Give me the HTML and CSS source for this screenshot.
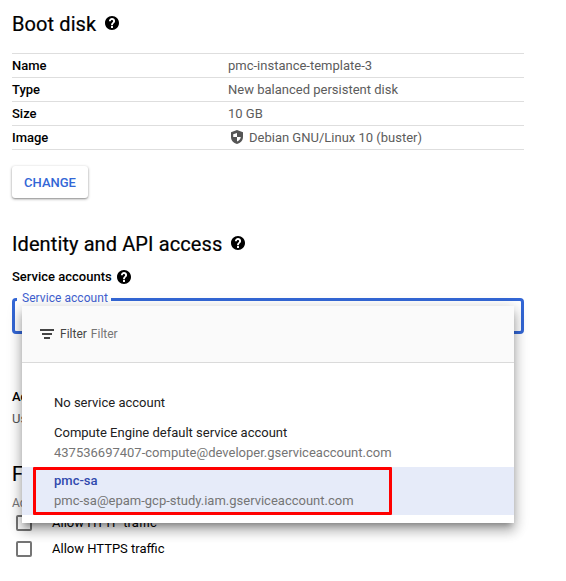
FILE: index.html
```html
<!DOCTYPE html>
<html lang="en">
<head>
<meta charset="utf-8">
<title>Create an instance</title>
<link rel="stylesheet" href="styles.css">
</head>
<body>
<svg class="defs" width="0" height="0" aria-hidden="true">
  <symbol id="help" viewBox="2 2 20 20"><path d="M12 2C6.480 2 2 6.480 2 12s4.480 10 10 10 10-4.480 10-10S17.520 2 12 2zm1.400 17h-2.800v-2.700h2.800V19zm2.100-7.400-.9.920c-.72.730-1.200 1.400-1.200 2.780h-2.800v-.5c0-1.300.5-2.200 1.200-2.900l1.240-1.260c.37-.36.500-.86.500-1.300 0-1-.7-1.600-1.600-1.600s-1.600.8-1.600 1.800H7.600C7.600 6.900 9.600 5 12 5s4.400 1.900 4.400 4.200c0 .9-.35 1.800-.9 2.400z"/></symbol>
</svg>
<main class="form">
  <h2 class="title">Boot disk <svg class="help"><use href="#help"/></svg></h2>
  <dl class="summary">
    <div class="row"><dt>Name</dt><dd>pmc-instance-template-3</dd></div>
    <div class="row"><dt>Type</dt><dd>New balanced persistent disk</dd></div>
    <div class="row"><dt>Size</dt><dd>10 GB</dd></div>
    <div class="row"><dt>Image</dt><dd class="image"><svg class="shield" viewBox="0 0 12 14"><path fill-rule="evenodd" d="M6 0 0 2.300V7c0 3.400 2.500 6.200 6 7 3.500-.8 6-3.600 6-7V2.300L6 0zM6 3v4H2.200V4.300L6 3zM6 7h3.800C9.500 9 8.200 10.700 6 11.500V7z"/></svg>Debian GNU/Linux 10 (buster)</dd></div>
  </dl>
  <button class="change">CHANGE</button>

  <h2 class="title identity">Identity and API access <svg class="help"><use href="#help"/></svg></h2>
  <div class="label">Service accounts <svg class="help"><use href="#help"/></svg></div>
  <div class="select">
    <span class="floating">Service account</span>
    <div class="menu">
      <div class="filter">
        <svg class="lines" viewBox="0 0 14 10"><path d="M0 0h14v2H0zM2 4h10v2H2zM4 8h6v2H4z"/></svg>
        <span class="filter-label">Filter</span><span class="filter-hint">Filter</span>
      </div>
      <ul class="options">
        <li class="option single"><span>No service account</span></li>
        <li class="option"><span>Compute Engine default service account</span><small>437536697407-compute@developer.gserviceaccount.com</small></li>
        <li class="option selected"><span>pmc-sa</span><small>pmc-sa@epam-gcp-study.iam.gserviceaccount.com</small><i class="marker"></i></li>
      </ul>
    </div>
  </div>
  <div class="scopes">Ac</div>
  <div class="scopes-hint">Us</div>
  <h2 class="title firewall">F</h2>
  <div class="firewall-hint">Ad</div>
  <label class="check"><span class="box"></span>Allow HTTP traffic</label>
  <label class="check"><span class="box"></span>Allow HTTPS traffic</label>
</main>
</body>
</html>
```
FILE: styles.css
```css
* { box-sizing: border-box; }
body {
  margin: 0;
  height: 581px;
  overflow: hidden;
  background: #fff;
  color: #000;
  font: 13px/20px Roboto, sans-serif;
}
.defs { position: absolute; }
.form { width: 512px; margin-left: 12px; padding-top: 10px; }
.title {
  display: flex;
  align-items: center;
  gap: 9px;
  height: 28px;
  margin: 0;
  font-size: 20px;
  font-weight: 400;
  line-height: 28px;
  letter-spacing: 0.1px;
  -webkit-text-stroke: 0.2px #000;
}
.help { width: 14px; height: 14px; flex: none; -webkit-text-stroke: 0; }
.title .help { margin-top: -2px; }
.summary { margin: 15px 0 16px; border-top: 1px solid #dedede; }
.row { display: flex; height: 24px; border-bottom: 1px solid #dedede; line-height: 23px; }
dt { width: 216px; font-weight: 500; letter-spacing: -0.02px; }
dd { margin: 0; color: #5c5c5c; }
.image { display: flex; align-items: center; }
.shield { width: 12px; height: 14px; margin: -1px 6px 0 3px; fill: #555; }
.change {
  display: block;
  width: 76px;
  height: 32px;
  padding: 0;
  border: 0;
  border-radius: 3px;
  background: #fff;
  color: #3367d6;
  font: 500 13px/34px Roboto, sans-serif;
  box-shadow: 0 1px 3px rgba(0, 0, 0, .4), 0 1px 1px rgba(0, 0, 0, .12);
}
.identity { margin-top: 32px; }
.label { display: flex; align-items: center; gap: 5px; height: 20px; margin-top: 9px; font-weight: 500; }
.select {
  position: relative;
  height: 36px;
  margin-top: 11px;
  border: 3px solid #3367d6;
  border-radius: 4px;
}
.floating {
  position: absolute;
  left: 2px;
  top: -11px;
  padding: 0 3px 0 5px;
  background: #fff;
  color: #3f5fd0;
  font-size: 12px;
  line-height: 16px;
  letter-spacing: 0.05px;
}
.menu {
  position: absolute;
  z-index: 2;
  top: 5px;
  left: 7px;
  width: 492px;
  height: 217px;
  background: #fff;
  box-shadow: 0 5px 6px -3px rgba(0, 0, 0, .3), 0 8px 11px 1px rgba(0, 0, 0, .2), 0 3px 14px 2px rgba(0, 0, 0, .14);
}
.filter {
  display: flex;
  align-items: center;
  height: 57px;
  padding-left: 18px;
  border-bottom: 1px solid #dadada;
  background: #fafafa;
  font-size: 12px;
}
.lines { width: 14px; height: 10px; margin: -1px 6px 0 0; fill: #444; }
.filter-label { margin-right: 4px; color: #444; }
.filter-hint { color: #757575; }
.options { margin: 0; padding: 24px 0 0; list-style: none; }
.option {
  position: relative;
  display: flex;
  flex-direction: column;
  height: 48px;
  padding: 4px 0 0 32px;
  color: #212121;
}
.option.single { height: 32px; padding-top: 6px; }
.option small { font-size: 13px; color: #757575; }
.option.selected { background: #e6ebf9; }
.selected span { color: #3049ae; font-weight: 500; }
.marker {
  position: absolute;
  left: 11px;
  top: 0;
  width: 359px;
  height: 48px;
  border: 3px solid #f00;
  border-radius: 1px;
}
.scopes { margin-top: 53px; font-weight: 500; }
.scopes-hint { margin-top: 2px; color: #555; }
.firewall { margin-top: 31px; }
.firewall-hint { margin-top: 5px; color: #757575; font-size: 12px; }
.check { display: flex; align-items: center; height: 26px; }
.firewall-hint + .check { margin-top: -3px; }
.box { width: 16px; height: 16px; margin: 0 20px 0 4px; border: 2px solid #757575; border-radius: 2px; }
```
